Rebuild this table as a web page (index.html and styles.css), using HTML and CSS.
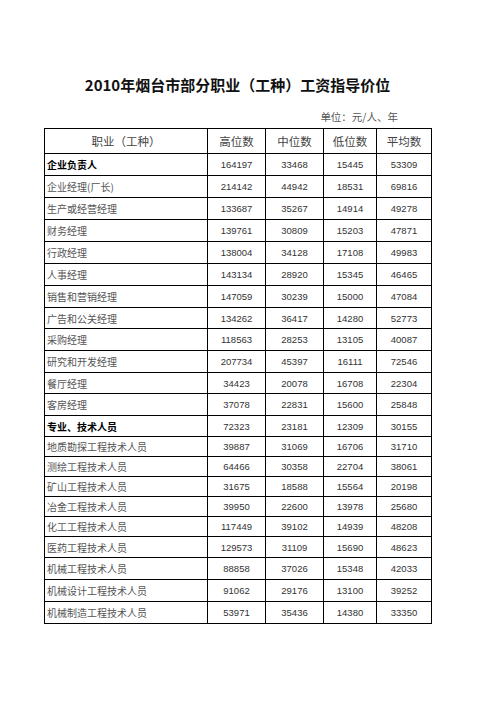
FILE: index.html
```html
<!DOCTYPE html>
<html lang="zh-CN">
<head>
<meta charset="utf-8">
<title>2010年烟台市部分职业（工种）工资指导价位</title>
<link rel="stylesheet" href="styles.css">
</head>
<body>
<div class="page">
  <h1 class="title">2010年烟台市部分职业（工种）工资指导价位</h1>
  <div class="unit">单位：元/人、年</div>
  <table class="wages">
    <colgroup>
      <col class="c-name"><col class="c-num1"><col class="c-num2"><col class="c-num3"><col class="c-num4">
    </colgroup>
    <thead>
      <tr><th class="h-name">职业（工种）</th><th>高位数</th><th>中位数</th><th>低位数</th><th>平均数</th></tr>
    </thead>
    <tbody>
      <tr class="r22 group"><td class="name">企业负责人</td><td>164197</td><td>33468</td><td>15445</td><td>53309</td></tr>
      <tr class="r22"><td class="name">企业经理(厂长)</td><td>214142</td><td>44942</td><td>18531</td><td>69816</td></tr>
      <tr class="r22"><td class="name">生产或经营经理</td><td>133687</td><td>35267</td><td>14914</td><td>49278</td></tr>
      <tr class="r22"><td class="name">财务经理</td><td>139761</td><td>30809</td><td>15203</td><td>47871</td></tr>
      <tr class="r22"><td class="name">行政经理</td><td>138004</td><td>34128</td><td>17108</td><td>49983</td></tr>
      <tr class="r22"><td class="name">人事经理</td><td>143134</td><td>28920</td><td>15345</td><td>46465</td></tr>
      <tr class="r22"><td class="name">销售和营销经理</td><td>147059</td><td>30239</td><td>15000</td><td>47084</td></tr>
      <tr class="r21"><td class="name">广告和公关经理</td><td>134262</td><td>36417</td><td>14280</td><td>52773</td></tr>
      <tr class="r22"><td class="name">采购经理</td><td>118563</td><td>28253</td><td>13105</td><td>40087</td></tr>
      <tr class="r22"><td class="name">研究和开发经理</td><td>207734</td><td>45397</td><td>16111</td><td>72546</td></tr>
      <tr class="r21"><td class="name">餐厅经理</td><td>34423</td><td>20078</td><td>16708</td><td>22304</td></tr>
      <tr class="r22"><td class="name">客房经理</td><td>37078</td><td>22831</td><td>15600</td><td>25848</td></tr>
      <tr class="r21 group"><td class="name">专业、技术人员</td><td>72323</td><td>23181</td><td>12309</td><td>30155</td></tr>
      <tr class="r20"><td class="name">地质勘探工程技术人员</td><td>39887</td><td>31069</td><td>16706</td><td>31710</td></tr>
      <tr class="r20"><td class="name">测绘工程技术人员</td><td>64466</td><td>30358</td><td>22704</td><td>38061</td></tr>
      <tr class="r20"><td class="name">矿山工程技术人员</td><td>31675</td><td>18588</td><td>15564</td><td>20198</td></tr>
      <tr class="r20"><td class="name">冶金工程技术人员</td><td>39950</td><td>22600</td><td>13978</td><td>25680</td></tr>
      <tr class="r20"><td class="name">化工工程技术人员</td><td>117449</td><td>39102</td><td>14939</td><td>48208</td></tr>
      <tr class="r21"><td class="name">医药工程技术人员</td><td>129573</td><td>31109</td><td>15690</td><td>48623</td></tr>
      <tr class="r22"><td class="name">机械工程技术人员</td><td>88858</td><td>37026</td><td>15348</td><td>42033</td></tr>
      <tr class="r22"><td class="name">机械设计工程技术人员</td><td>91062</td><td>29176</td><td>13100</td><td>39252</td></tr>
      <tr class="r22"><td class="name">机械制造工程技术人员</td><td>53971</td><td>35436</td><td>14380</td><td>33350</td></tr>
    </tbody>
  </table>
</div>
</body>
</html>
```

FILE: styles.css
```css
html, body {
  margin: 0;
  padding: 0;
  background: #ffffff;
}

.page {
  width: 387px;
  padding: 74px 0 40px 44px;
  font-family: "Noto Sans CJK SC", "Liberation Sans", sans-serif;
  color: #3a3a3a;
}

.title {
  margin: 0;
  font-size: 15px;
  line-height: 22px;
  font-weight: 700;
  color: #111;
  text-align: center;
  letter-spacing: 0;
}

.unit {
  margin: 14px 33px 0 0;
  font-size: 10.5px;
  line-height: 14px;
  text-align: right;
  color: #555;
}

.wages {
  margin-top: 4px;
  width: 387px;
  table-layout: fixed;
  border-collapse: collapse;
  border: 1px solid #000;
}

.c-name { width: 163px; }
.c-num1 { width: 58px; }
.c-num2 { width: 58px; }
.c-num3 { width: 53px; }
.c-num4 { width: 55px; }

.wages th,
.wages td {
  border: 1px solid #000;
  padding: 0;
  vertical-align: middle;
  text-align: center;
  white-space: nowrap;
  overflow: hidden;
}

.wages th {
  height: 24px;
  font-size: 11.5px;
  font-weight: 400;
  color: #444;
}

.wages td {
  font-family: "Liberation Sans", "Noto Sans CJK SC", sans-serif;
  font-size: 9.5px;
  color: #333;
}

.wages td.name {
  text-align: left;
  padding-left: 2px;
  font-family: "Noto Sans CJK SC", sans-serif;
  font-size: 10px;
  color: #555;
}

.wages .group td.name {
  font-weight: 700;
  color: #000;
}

.r22 td { height: 21px; }
.r21 td { height: 20px; }
.r20 td { height: 19px; }
```
